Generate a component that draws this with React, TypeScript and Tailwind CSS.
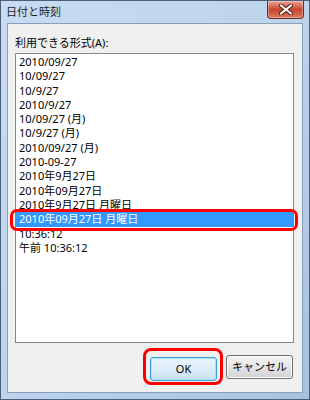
import React from 'react';

const FORMATS = [
  '2010/09/27',
  '10/09/27',
  '10/9/27',
  '2010/9/27',
  '10/09/27 (月)',
  '10/9/27 (月)',
  '2010/09/27 (月)',
  '2010-09-27',
  '2010年9月27日',
  '2010年09月27日',
  '2010年9月27日 月曜日',
  '2010年09月27日 月曜日',
  '10:36:12',
  '午前 10:36:12',
];

const SELECTED = 11;

const font = { fontFamily: '"Noto Sans", "Noto Sans CJK JP", sans-serif' };

function CloseButton() {
  return (
    <div className="flex h-[18px] w-[37px] items-center justify-center rounded-b-[4px] border border-t-0 border-[#6b2a1e] bg-gradient-to-b from-[#e8a493] via-[#c8452b] to-[#d9785f] shadow-[inset_0_0_0_1px_rgba(255,255,255,0.35)]">
      <svg width="14" height="11" viewBox="0 0 14 11">
        <path d="M2 1.5 L12 9.5 M12 1.5 L2 9.5" stroke="#4a1a12" strokeWidth="4" strokeLinecap="round" />
        <path d="M2 1.5 L12 9.5 M12 1.5 L2 9.5" stroke="#ffffff" strokeWidth="2.2" strokeLinecap="round" />
      </svg>
    </div>
  );
}

export default function App() {
  return (
    <div
      className="flex h-[400px] w-[310px] flex-col border border-[#4b5f78] bg-gradient-to-br from-[#c7dcf1] via-[#bcd4ec] to-[#a7c2df] text-[#000]"
      style={font}
    >
      {/* Title bar */}
      <div className="flex h-[22px] shrink-0 items-start justify-between">
        <span className="pl-[5px] pt-[3px] text-[11px] leading-[16px] text-[#1e1e1e]">日付と時刻</span>
        <div className="pr-[5px]">
          <CloseButton />
        </div>
      </div>

      {/* Client area */}
      <div className="mx-[6px] mb-[6px] flex flex-1 flex-col border border-[#8a9fb7] bg-[#f0f0f0] px-[7px] pb-[11px] pt-[12px]">
        <div className="text-[11px] leading-[14px]">利用できる形式(A):</div>

        <div className="relative mt-[3px] h-[290px] w-[279px] border border-[#828790] bg-white py-[1px]">
          {FORMATS.map((f, i) => (
            <div
              key={f}
              className={
                i === SELECTED
                  ? 'h-[14.3px] bg-[#3399ff] pl-[3px] text-[11px] leading-[14.3px] text-white'
                  : 'h-[14.3px] pl-[3px] text-[11px] leading-[14.3px] text-[#000]'
              }
            >
              {f}
            </div>
          ))}
          {/* callout around selected row */}
          <div className="pointer-events-none absolute left-[-6px] top-[155px] h-[22px] w-[288px] rounded-[7px] border-[3px] border-[#ff0000]" />
        </div>

        <div className="mt-auto flex justify-end gap-[9px] pr-[2px]">
          <div className="relative">
            <button className="h-[24px] w-[67px] rounded-[3px] border border-[#3c9ed8] bg-gradient-to-b from-[#eaf5fc] via-[#dcedf8] to-[#c7e1f3] text-[11px] shadow-[inset_0_0_0_1px_#a8e3fa]">
              OK
            </button>
            <div className="pointer-events-none absolute left-[-7px] top-[-7px] h-[37px] w-[80px] rounded-[8px] border-[3px] border-[#ff0000]" />
          </div>
          <button className="h-[24px] w-[67px] rounded-[3px] border border-[#707070] bg-gradient-to-b from-[#f2f2f2] via-[#e6e6e6] to-[#d3d3d3] text-[11px] shadow-[inset_0_0_0_1px_#fcfcfc]">
            キャンセル
          </button>
        </div>
      </div>
    </div>
  );
}
